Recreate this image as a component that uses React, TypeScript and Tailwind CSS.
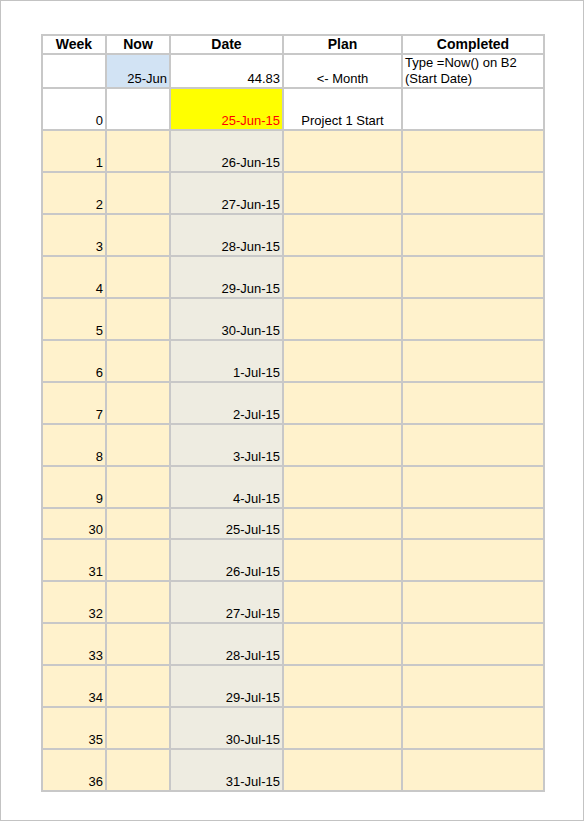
import React from "react";

const font = { fontFamily: '"Liberation Sans", Arial, sans-serif' };

type Row = { week: string; date: string; h: string };

const rows: Row[] = [
  { week: "1", date: "26-Jun-15", h: "h-[40px]" },
  { week: "2", date: "27-Jun-15", h: "h-[40px]" },
  { week: "3", date: "28-Jun-15", h: "h-[40px]" },
  { week: "4", date: "29-Jun-15", h: "h-[40px]" },
  { week: "5", date: "30-Jun-15", h: "h-[40px]" },
  { week: "6", date: "1-Jul-15", h: "h-[40px]" },
  { week: "7", date: "2-Jul-15", h: "h-[40px]" },
  { week: "8", date: "3-Jul-15", h: "h-[40px]" },
  { week: "9", date: "4-Jul-15", h: "h-[40px]" },
  { week: "30", date: "25-Jul-15", h: "h-[29px]" },
  { week: "31", date: "26-Jul-15", h: "h-[40px]" },
  { week: "32", date: "27-Jul-15", h: "h-[40px]" },
  { week: "33", date: "28-Jul-15", h: "h-[40px]" },
  { week: "34", date: "29-Jul-15", h: "h-[40px]" },
  { week: "35", date: "30-Jul-15", h: "h-[40px]" },
  { week: "36", date: "31-Jul-15", h: "h-[40px]" },
];

const base = "flex items-end px-[2px] text-[13px] leading-[16px] text-black";

export default function App() {
  return (
    <div className="w-[584px] h-[821px] border border-[#c3c3c3] bg-white pl-[40px] pt-[33px]" style={font}>
      <div className="grid w-[504px] grid-cols-[62px_62px_111px_117px_140px] gap-[2px] bg-[#c8c8c8] p-[2px]">
        {/* header */}
        {["Week", "Now", "Date", "Plan", "Completed"].map((h) => (
          <div key={h} className="flex h-[17px] items-center justify-center bg-white text-[14px] font-bold leading-[17px] text-black">
            {h}
          </div>
        ))}
        {/* row 2 */}
        <div className={`${base} h-[32px] bg-white`} />
        <div className={`${base} h-[32px] justify-end bg-[#d2e3f4]`}>25-Jun</div>
        <div className={`${base} h-[32px] justify-end bg-white`}>44.83</div>
        <div className={`${base} h-[32px] justify-center bg-white`}>&lt;- Month</div>
        <div className={`${base} h-[32px] justify-start bg-white`}>
          <span>Type =Now() on B2 (Start Date)</span>
        </div>
        {/* row week 0 */}
        <div className={`${base} h-[40px] justify-end bg-white`}>0</div>
        <div className={`${base} h-[40px] bg-white`} />
        <div className={`${base} h-[40px] justify-end bg-[#ffff00] text-[#ff0000]`}>
          <span className="text-[#ff0000]">25-Jun-15</span>
        </div>
        <div className={`${base} h-[40px] justify-center bg-white`}>Project 1 Start</div>
        <div className={`${base} h-[40px] bg-white`} />
        {rows.map((r) => (
          <React.Fragment key={r.week}>
            <div className={`${base} ${r.h} justify-end bg-[#fff2cc]`}>{r.week}</div>
            <div className={`${base} ${r.h} bg-[#fff2cc]`} />
            <div className={`${base} ${r.h} justify-end bg-[#eeece1]`}>{r.date}</div>
            <div className={`${base} ${r.h} bg-[#fff2cc]`} />
            <div className={`${base} ${r.h} bg-[#fff2cc]`} />
          </React.Fragment>
        ))}
      </div>
    </div>
  );
}
